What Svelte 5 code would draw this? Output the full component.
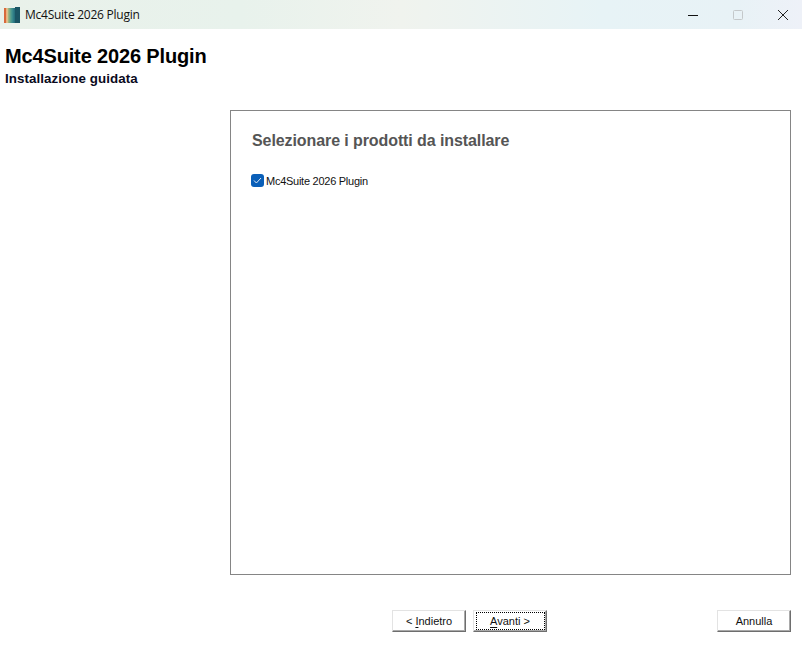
<script>
  const stripes = [
    { w: 2, c: '#d8693c' }, { w: 1, c: '#e9b27c' }, { w: 1, c: '#d8c08e' }, { w: 1, c: '#9fb583' },
    { w: 1, c: '#7fab85' }, { w: 1, c: '#5fa18b' }, { w: 1, c: '#4a968e' }, { w: 1, c: '#3b8a8c' },
    { w: 1, c: '#2f7d86' }, { w: 1, c: '#27707c' }, { w: 5, c: '#1b5564' }
  ];
  let x = 0;
  const bars = stripes.map((s, i) => {
    const b = { ...s, x, tall: i === stripes.length - 1 };
    x += s.w;
    return b;
  });
</script>

<div class="window">
  <header class="titlebar">
    <svg class="logo" width="16" height="16" viewBox="0 0 16 16" aria-hidden="true">
      {#each bars as b}
        <rect x={b.x} y={b.tall ? 0 : 1} width={b.w} height={b.tall ? 16 : 15} fill={b.c} />
      {/each}
    </svg>
    <span class="title">Mc4Suite 2026 Plugin</span>
    <div class="controls">
      <span class="ctl"><svg width="10" height="10" viewBox="0 0 10 10"><path d="M0 5.5H10" stroke="#111" stroke-width="1"/></svg></span>
      <span class="ctl mid"><svg width="10" height="10" viewBox="0 0 10 10"><rect x=".5" y=".5" width="9" height="9" rx="1" fill="none" stroke="#c4c8ca"/></svg></span>
      <span class="ctl"><svg width="10" height="10" viewBox="0 0 10 10"><path d="M0 0L10 10M10 0L0 10" stroke="#222" stroke-width="1"/></svg></span>
    </div>
  </header>

  <section class="head">
    <h1>Mc4Suite 2026 Plugin</h1>
    <h2>Installazione guidata</h2>
  </section>

  <main class="panel">
    <h3>Selezionare i prodotti da installare</h3>
    <label class="check">
      <span class="box"><svg width="9" height="7" viewBox="0 0 9 7"><path d="M1 3.5L3.4 6L8 1" fill="none" stroke="#dfe9f5" stroke-width="1"/></svg></span>
      <span class="lbl">Mc4Suite 2026 Plugin</span>
    </label>
  </main>

  <footer class="foot">
    <button><span>&lt; <u>I</u>ndietro</span></button>
    <button class="focus"><span><u>A</u>vanti &gt;</span></button>
    <button class="cancel"><span>Annulla</span></button>
  </footer>
</div>

<style>
  :global(body) { margin: 0; background: #fff; }
  .window {
    width: 802px; height: 645px; display: flex; flex-direction: column;
    background: #fff; overflow: hidden; font-family: "Liberation Sans", Arial, sans-serif; color: #000;
  }
  .titlebar {
    height: 29px; flex: none; display: flex; align-items: center; padding-left: 4px; box-sizing: border-box;
    background: linear-gradient(90deg, #e9f1ea 0%, #e8f2ec 30%, #f0f3ee 50%, #e7f3f6 75%, #e8f2f6 92%, #eef1f8 100%);
  }
  .logo { margin-right: 5px; flex: none; }
  .title { font: 12px "Open Sans", "Noto Sans", sans-serif; color: #111; letter-spacing: -0.25px; }
  .controls { margin-left: auto; display: flex; margin-right: -4px; }
  .ctl { width: 46px; height: 29px; display: flex; align-items: center; justify-content: center; }
  .mid { width: 44px; }
  .ctl svg { display: block; }
  .head { flex: none; height: 81px; padding: 16px 0 0 5px; box-sizing: border-box; }
  h1 { margin: 0; font-size: 20px; line-height: 23px; font-weight: 700; letter-spacing: -0.15px; }
  h2 { margin: 3px 0 0; font-size: 13.33px; line-height: 15px; font-weight: 700; letter-spacing: 0.08px; color: #0a0a20; }
  .panel {
    flex: none; height: 465px; margin: 0 11px 0 230px; box-sizing: border-box;
    border: 1px solid #858585; padding: 20px 21px;
  }
  h3 { margin: 0; font-size: 16px; line-height: 19px; font-weight: 700; color: #555; letter-spacing: -0.09px; }
  .check { display: flex; align-items: flex-start; gap: 2px; margin: 24px 0 0 -1px; color: #111; }
  .lbl { font: 11px/13px "Liberation Sans", sans-serif; letter-spacing: -0.26px; margin-top: 1px; }
  .box {
    width: 13px; height: 13px; border-radius: 3px; background: #0a5fb8;
    display: flex; align-items: center; justify-content: center; flex: none;
  }
  .box svg { display: block; }
  .foot { flex: 1; display: flex; align-items: flex-start; padding: 35px 11px 0 392px; gap: 7px; }
  button {
    width: 74px; height: 22px; padding: 0; background: #fff; box-sizing: border-box;
    border: 1px solid; border-color: #e3e3e3 #6e6e6e #6e6e6e #e3e3e3;
    box-shadow: inset -1px -1px 0 #a9a9a9;
    font: 11px "Liberation Sans", sans-serif; color: #111;
    display: flex; align-items: center; justify-content: center;
  }
  .focus span { outline: 1px dotted #000; width: 67px; height: 16px; line-height: 16px; display: block; }
  .cancel { margin-left: auto; }
  u { text-underline-offset: 1.5px; }
</style>
